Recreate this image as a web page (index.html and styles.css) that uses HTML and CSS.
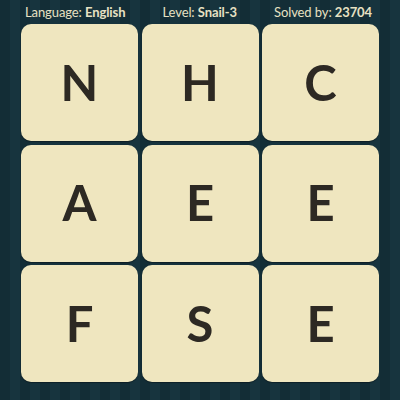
FILE: index.html
```html
<!DOCTYPE html>
<html>
<head>
<meta charset="utf-8">
<link rel="stylesheet" href="styles.css">
</head>
<body>
<div class="page">
  <div class="header">
    <span class="info">Language: <b>English</b></span>
    <span class="info">Level: <b>Snail-3</b></span>
    <span class="info">Solved by: <b>23704</b></span>
  </div>
  <div class="board">
    <div class="tile">N</div>
    <div class="tile">H</div>
    <div class="tile">C</div>
    <div class="tile">A</div>
    <div class="tile">E</div>
    <div class="tile">E</div>
    <div class="tile">F</div>
    <div class="tile">S</div>
    <div class="tile">E</div>
  </div>
</div>
</body>
</html>
```
FILE: styles.css
```css
html, body {
  margin: 0;
  padding: 0;
}
body {
  width: 400px;
  height: 400px;
  overflow: hidden;
  background-color: #14303a;
  background-image: repeating-linear-gradient(90deg, #132d36 0px, #132d36 10px, #17343e 10px, #17343e 20px);
  font-family: "Lato", "Open Sans", sans-serif;
}
.page {
  width: 400px;
  height: 400px;
  box-sizing: border-box;
}
.header {
  display: flex;
  justify-content: space-between;
  align-items: center;
  height: 23px;
  padding: 1px 28px 0 25px;
  box-sizing: border-box;
  color: #e7e1c3;
  font-size: 13px;
  letter-spacing: -0.1px;
}
.info b {
  font-weight: 700;
}
.board {
  display: grid;
  grid-template-columns: repeat(3, 117px);
  grid-template-rows: repeat(3, 117px);
  gap: 3.5px;
  padding: 1px 0 0 21px;
}
.tile {
  background: #efe6bf;
  border-radius: 10px;
  box-shadow: 0 1px 1px rgba(0, 0, 0, 0.35);
  display: flex;
  align-items: center;
  justify-content: center;
  color: #2d2923;
  font-size: 49px;
  font-weight: 700;
  padding-bottom: 2px;
  box-sizing: border-box;
}
```
